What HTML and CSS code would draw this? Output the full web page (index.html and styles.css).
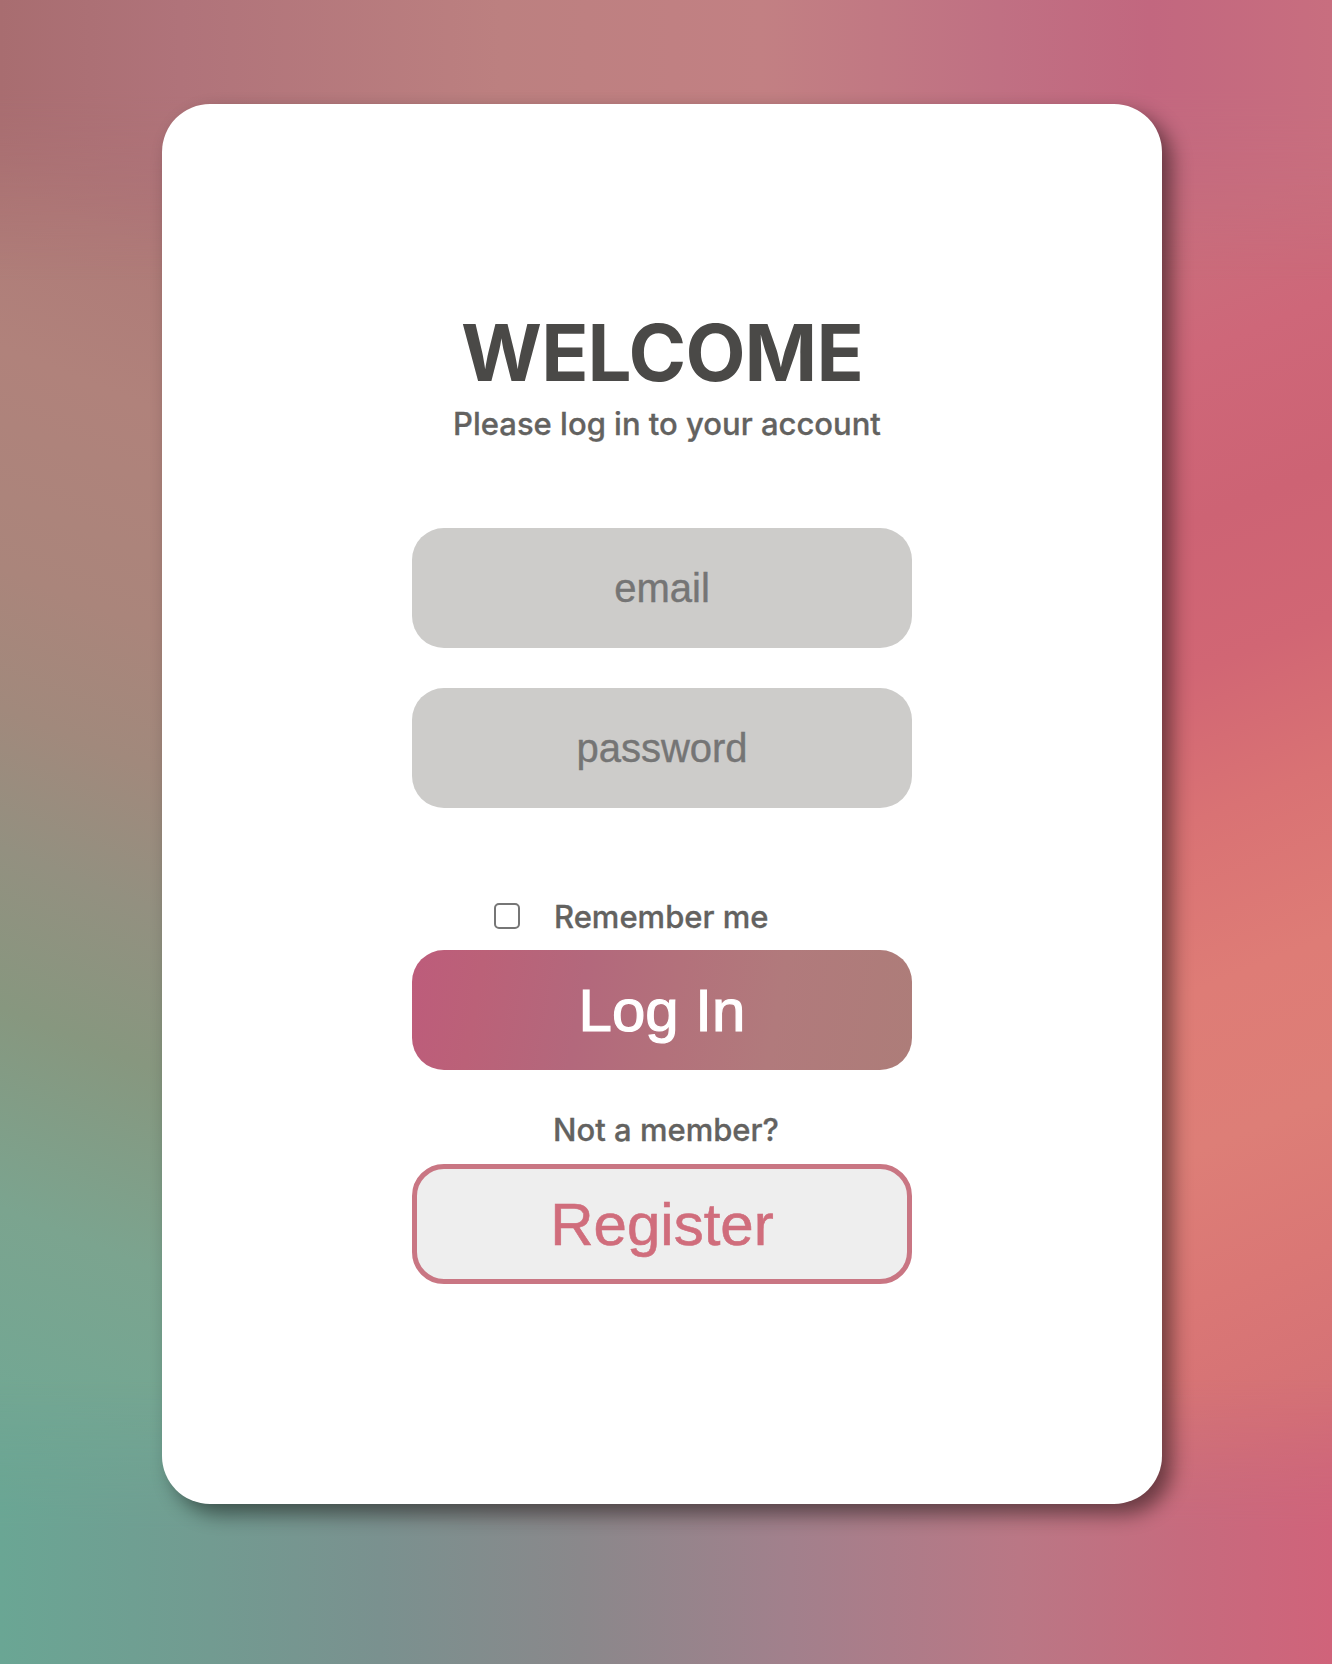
FILE: index.html
```html
<!DOCTYPE html>
<html lang="en">
<head>
  <meta charset="utf-8">
  <title>Log in</title>
  <link rel="stylesheet" href="styles.css">
</head>
<body>
  <div class="backdrop">
    <div class="backdrop-left"></div>
    <div class="backdrop-right"></div>
    <div class="backdrop-top"></div>
    <div class="backdrop-bottom"></div>
  </div>
  <main class="card">
    <h1 class="title">WELCOME</h1>
    <p class="note subtitle">Please log in to your account</p>
    <form class="form">
      <input class="field" type="email" placeholder="email" aria-label="email">
      <input class="field" type="password" placeholder="password" aria-label="password">
      <label class="remember"><input class="check" type="checkbox"><span class="note remember-text">Remember me</span></label>
      <button class="button login" type="button">Log In</button>
      <p class="note member">Not a member?</p>
      <button class="button register" type="button">Register</button>
    </form>
  </main>
</body>
</html>
```
FILE: styles.css
```css
* {
  box-sizing: border-box;
}

body {
  margin: 0;
  height: 1664px;
  padding: 104px 0 0 162px;
  overflow: hidden;
  font-family: Inter, "Liberation Sans", sans-serif;
}

/* Colour mesh: each edge has its own gradient, faded into its neighbours */
.backdrop {
  position: absolute;
  inset: 0;
  z-index: -1;
  overflow: hidden;
  background: #b07a7c;
}

.backdrop-left,
.backdrop-right,
.backdrop-top,
.backdrop-bottom {
  position: absolute;
  inset: 0;
}

/* The side bands are 200px taller at each end so that the slant leaves no gap */
.backdrop-left {
  inset: -200px 0;
  background: linear-gradient(#a9706f 200px, #ac7376 330px, #af7b78 420px, #b0827b 580px, #aa857b 800px, #a1897c 940px, #939080 1080px, #87977f 1240px, #7ba48f 1440px, #73a793 1620px, #6ba493 1840px);
  transform: skewY(22deg);
  transform-origin: 81px 50%;
  mask-image: linear-gradient(90deg, #000 200px, transparent 500px);
}

.backdrop-right {
  inset: -200px 0;
  background: linear-gradient(#c46e80 200px, #c96e7c 400px, #ce6779 530px, #cd6374 700px, #d16674 850px, #d97274 1000px, #de7c76 1170px, #dd7e77 1330px, #da7775 1480px, #d47176 1640px, #cb6b7c 1760px, #c8657d 1864px);
  transform: skewY(-22deg);
  transform-origin: 1247px 50%;
  mask-image: linear-gradient(90deg, transparent 900px, #000 1150px);
}

.backdrop-top {
  background: linear-gradient(90deg, #a86d70 0, #b0737a 180px, #bc8080 500px, #c28083 760px, #c07083 1000px, #c2677f 1150px, #c86e7f 1332px);
  mask-image: linear-gradient(#000 90px, transparent 280px);
}

.backdrop-bottom {
  background: linear-gradient(90deg, #6aa694 0, #729b91 210px, #7a918f 380px, #8a888b 580px, #a2808c 790px, #ba7785 1020px, #c66b7e 1180px, #d0637a 1332px);
  mask-image: linear-gradient(transparent 1380px, #000 1530px);
}

.card {
  display: flex;
  flex-direction: column;
  align-items: center;
  width: 1000px;
  height: 1400px;
  padding-top: 201px;
  border-radius: 48px;
  background: #fff;
  box-shadow: 10px 10px 20px rgba(0, 0, 0, 0.48);
}

.title {
  margin: 0;
  height: 99px;
  font-size: 78px;
  font-weight: 700;
  line-height: 96px;
  letter-spacing: -0.9px;
  color: #4a4947;
}

.note {
  margin: 0;
  font-size: 31px;
  font-weight: 500;
  line-height: 40px;
  white-space: nowrap;
  color: #636260;
  -webkit-text-stroke: 0.3px currentColor;
}

.subtitle {
  padding-left: 10px;
}

.form {
  display: flex;
  flex-direction: column;
  width: 500px;
  margin-top: 84px;
}

.field {
  height: 120px;
  margin: 0 0 40px;
  padding: 1px 0 0;
  border: 0;
  border-radius: 32px;
  background: #cdccca;
  font: 40px "Liberation Sans", Arial, sans-serif;
  text-align: center;
}

.field::placeholder {
  color: #757575;
  -webkit-text-stroke: 0.4px currentColor;
}

.remember {
  display: flex;
  align-items: center;
  gap: 34px;
  height: 40px;
  margin: 48px 0 14px;
  padding-left: 82px;
}

.check {
  appearance: none;
  width: 26px;
  height: 26px;
  margin: 0;
  border: 2px solid #767676;
  border-radius: 5px;
  background: #fff;
}

.remember-text {
  padding-top: 1px;
}

.button {
  height: 120px;
  padding: 2px 0 0;
  border: 0;
  border-radius: 32px;
  font: 60px/1 "Liberation Sans", Arial, sans-serif;
  -webkit-text-stroke: 0.6px currentColor;
}

.login {
  background: linear-gradient(100deg, #bd5c7b 0, #bb6178 14%, #b3687c 34%, #b3717b 52%, #b17a7c 72%, #ad7d79 100%);
  color: #fff;
  -webkit-text-stroke-width: 1.2px;
}

.member {
  margin: 40px 0 14px;
  padding-left: 8px;
  text-align: center;
}

.register {
  border: 5px solid #c97683;
  background: #eee;
  color: #d06d7c;
}
```
